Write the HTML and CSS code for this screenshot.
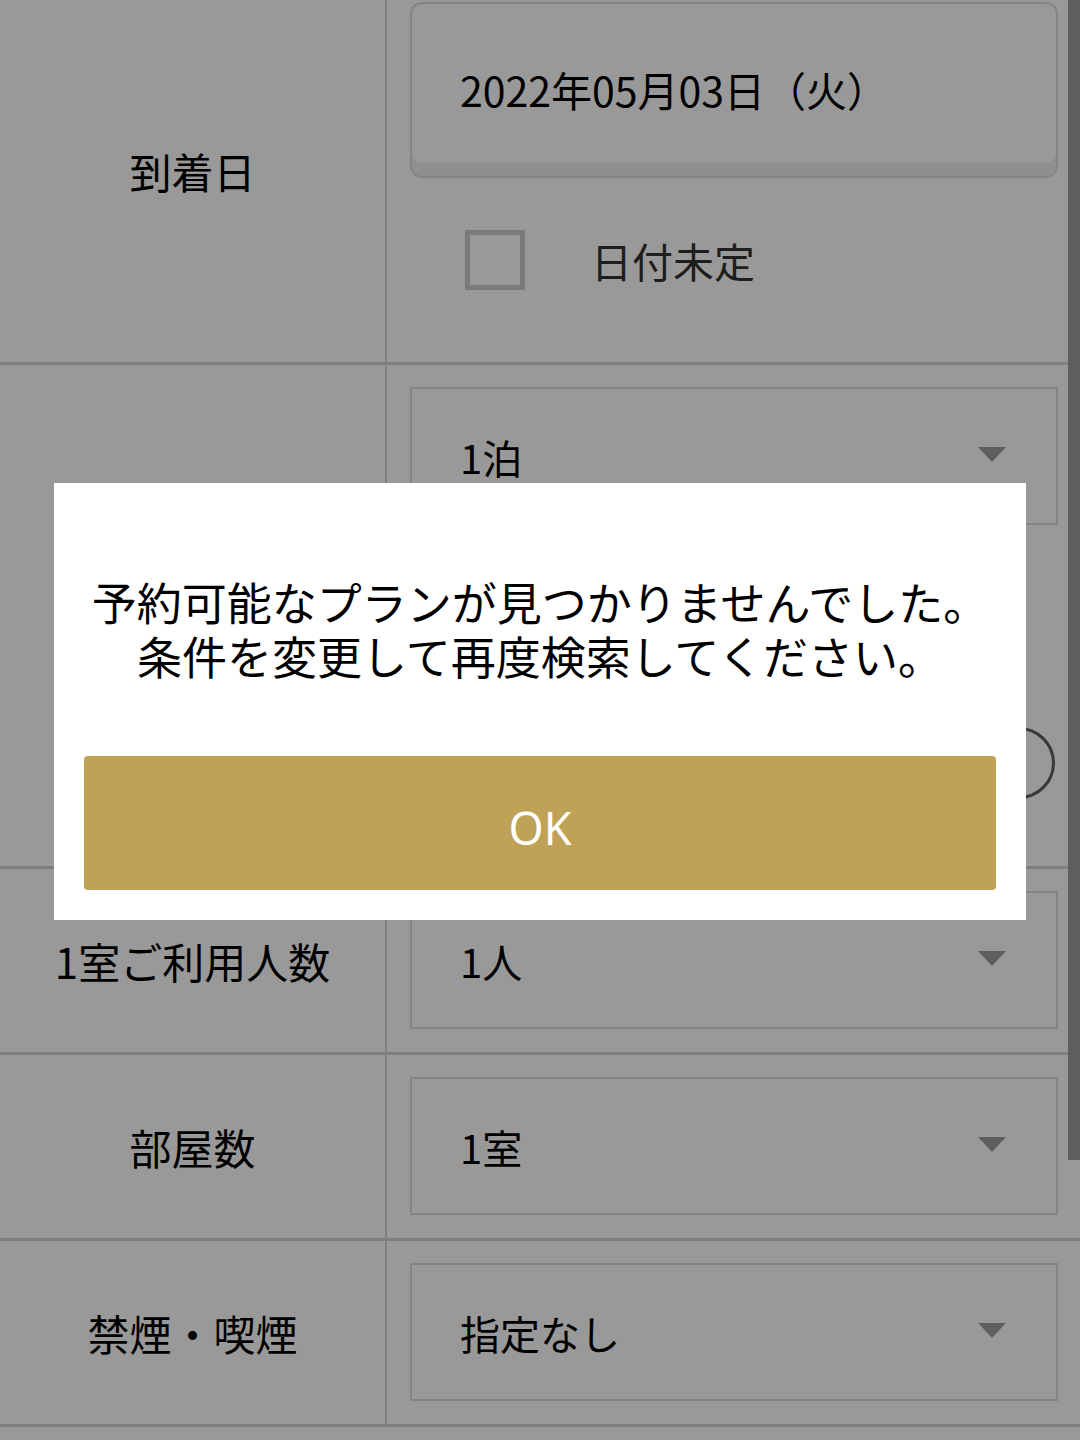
FILE: index.html
```html
<!DOCTYPE html>
<html lang="ja">
<head>
    <meta charset="UTF-8">
    <title>空室検索</title>
    <link rel="stylesheet" href="styles.css">
</head>
<body>
<div id="page">
    <div class="row">
        <div class="row-label">到着日</div>
        <div class="row-field">
            <div class="date-box">2022年05月03日（火）</div>
            <label class="check-line">
                <span class="check-box"></span>
                <span class="check-text">日付未定</span>
            </label>
        </div>
    </div>
    <div class="row">
        <div class="row-label"></div>
        <div class="row-field">
            <div class="select-box">
                <span>1泊</span>
                <svg class="arrow" width="28" height="15" viewBox="0 0 28 15"><polygon points="0,0 28,0 14,15"/></svg>
            </div>
            <div class="extra">
                <span class="circle"></span>
            </div>
        </div>
    </div>
    <div class="row">
        <div class="row-label">1室ご利用人数</div>
        <div class="row-field">
            <div class="select-box">
                <span>1人</span>
                <svg class="arrow" width="28" height="15" viewBox="0 0 28 15"><polygon points="0,0 28,0 14,15"/></svg>
            </div>
        </div>
    </div>
    <div class="row">
        <div class="row-label">部屋数</div>
        <div class="row-field">
            <div class="select-box">
                <span>1室</span>
                <svg class="arrow" width="28" height="15" viewBox="0 0 28 15"><polygon points="0,0 28,0 14,15"/></svg>
            </div>
        </div>
    </div>
    <div class="row">
        <div class="row-label">禁煙・喫煙</div>
        <div class="row-field">
            <div class="select-box">
                <span>指定なし</span>
                <svg class="arrow" width="28" height="15" viewBox="0 0 28 15"><polygon points="0,0 28,0 14,15"/></svg>
            </div>
        </div>
    </div>
</div>

<div id="overlay">
    <div id="dialog">
        <p class="message">予約可能なプランが見つかりませんでした。<br>条件を変更して再度検索してください。</p>
        <button class="ok-btn">OK</button>
    </div>
</div>
<div id="scrollbar"></div>
</body>
</html>
```

FILE: styles.css
```css
* {
    padding: 0;
    margin: 0;
    box-sizing: border-box;
}

html, body {
    height: 100%;
    overflow: hidden;
}

body {
    background: #ffffff;
    font-family: "Noto Sans CJK JP", "Noto Sans", sans-serif;
    color: #000000;
}

#page {
    margin-top: -22px;
}

.row {
    display: flex;
    border-bottom: 3px solid #d4d4d4;
}

.row-label {
    width: 387px;
    border-right: 2px solid #d4d4d4;
    display: flex;
    align-items: center;
    justify-content: center;
    font-size: 42px;
}

.row-field {
    flex: 1;
    padding: 22px 22px 23px 23px;
}

.date-box {
    height: 176px;
    margin-top: 2px;
    border: 2px solid #dedede;
    border-radius: 12px;
    box-shadow: inset 0 -13px 0 #eeeeee;
    padding: 0 0 2px 48px;
    display: flex;
    align-items: center;
    font-size: 41px;
}

.check-line {
    display: flex;
    align-items: center;
    margin: 52px 0 49px 55px;
    height: 60px;
}

.check-box {
    width: 60px;
    height: 60px;
    border: 5px solid #cccccc;
}

.check-text {
    margin-left: 66px;
    font-size: 41px;
    color: #333333;
}

.select-box {
    height: 138px;
    border: 2px solid #dcdcdc;
    padding: 2px 50px 0 48px;
    display: flex;
    align-items: center;
    justify-content: space-between;
    font-size: 40px;
}

.arrow {
    fill: #9e9e9e;
    margin-top: -6px;
}

.extra {
    height: 318px;
    display: flex;
    justify-content: flex-end;
    align-items: flex-start;
}

.circle {
    width: 72px;
    height: 72px;
    border: 3px solid #606060;
    border-radius: 50%;
    margin: 202px 3px 0 0;
}

#overlay {
    position: fixed;
    left: 0;
    top: 0;
    right: 0;
    bottom: 0;
    background: rgba(0, 0, 0, 0.4);
    display: flex;
    justify-content: center;
    align-items: flex-start;
    padding-top: 483px;
}

#dialog {
    width: 972px;
    background: #ffffff;
    padding: 92px 30px 30px;
}

.message {
    font-size: 45px;
    line-height: 54px;
    text-align: center;
    color: #000000;
}

.ok-btn {
    display: block;
    width: 100%;
    height: 134px;
    margin-top: 73px;
    border: none;
    border-radius: 4px;
    background: #c0a256;
    color: #ffffff;
    font-family: "Noto Sans", sans-serif;
    font-size: 45px;
    padding-top: 8px;
}

#scrollbar {
    position: fixed;
    right: 0;
    top: 0;
    width: 12px;
    height: 1160px;
    background: #5e5e5e;
}
```
